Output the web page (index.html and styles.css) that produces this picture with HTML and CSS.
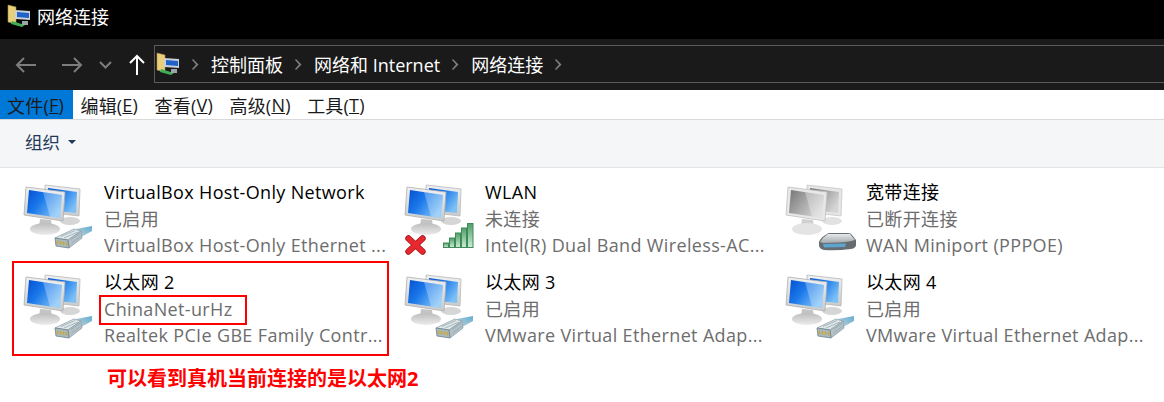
FILE: index.html
```html
<!doctype html>
<html lang="zh-CN">
  <head>
    <title>网络连接</title>
    <meta charset="UTF-8">
    <link rel="stylesheet" href="styles.css">
  </head>
  <body>
<svg class="defs" width="0" height="0">
  <defs>
    <linearGradient id="screen" x1="0" y1="0" x2="1" y2="0.6">
      <stop offset="0" stop-color="#0650d0"/>
      <stop offset="0.45" stop-color="#1a78ea"/>
      <stop offset="1" stop-color="#7cc0f6"/>
    </linearGradient>
    <linearGradient id="screen-off" x1="0" y1="0" x2="1" y2="0.6">
      <stop offset="0" stop-color="#757575"/>
      <stop offset="0.45" stop-color="#a2a2a2"/>
      <stop offset="1" stop-color="#d6d6d6"/>
    </linearGradient>
    <linearGradient id="frame" x1="0" y1="0" x2="0" y2="1">
      <stop offset="0" stop-color="#eef0f1"/>
      <stop offset="1" stop-color="#c9cbcc"/>
    </linearGradient>
    <linearGradient id="stand" x1="0" y1="0" x2="0" y2="1">
      <stop offset="0" stop-color="#bdbdbd"/>
      <stop offset="1" stop-color="#ececec"/>
    </linearGradient>
    <linearGradient id="bar" x1="0" y1="0" x2="0" y2="1">
      <stop offset="0" stop-color="#4f9f68"/>
      <stop offset="1" stop-color="#c9eed5"/>
    </linearGradient>
    <linearGradient id="cable" x1="0" y1="1" x2="1" y2="0">
      <stop offset="0" stop-color="#c3d0d6"/>
      <stop offset="1" stop-color="#62aed3"/>
    </linearGradient>
    <linearGradient id="modem-top" x1="0" y1="0" x2="0" y2="1">
      <stop offset="0" stop-color="#e6e8e9"/>
      <stop offset="1" stop-color="#a3a9ad"/>
    </linearGradient>
    <symbol id="pcs" viewBox="0 0 66 66">
      <!-- back monitor -->
      <ellipse cx="47" cy="39" rx="10" ry="4" fill="#d6d6d6"/>
      <path d="M22 3 L57 7 L56 34 L22 30 Z" fill="url(#frame)" stroke="#b8b8b8" stroke-width="0.8"/>
      <path d="M25 6 L54 10 L53 31 L25 28 Z" fill="url(#screen)"/>
      <!-- front monitor -->
      <path d="M17 37 L28 38 L29 45 L16 45 Z" fill="#c4c4c4"/>
      <ellipse cx="22" cy="47" rx="15" ry="6" fill="url(#stand)"/>
      <path d="M3 5 L42 10 L40 39 L1 33 Z" fill="url(#frame)" stroke="#aeaeae" stroke-width="0.8"/>
      <path d="M6 8 L39 13 L37 36 L4 31 Z" fill="url(#screen)"/>
      <path d="M20 10 L39 13 L37 36 L27 34.5 Z" fill="#fff" opacity="0.28"/>
    </symbol>
    <symbol id="pcs-off" viewBox="0 0 66 66">
      <ellipse cx="47" cy="39" rx="10" ry="4" fill="#e2e2e2"/>
      <path d="M22 3 L57 7 L56 34 L22 30 Z" fill="#e6e6e6" stroke="#c6c6c6" stroke-width="0.8"/>
      <path d="M25 6 L54 10 L53 31 L25 28 Z" fill="url(#screen-off)"/>
      <path d="M17 37 L28 38 L29 45 L16 45 Z" fill="#d0d0d0"/>
      <ellipse cx="22" cy="47" rx="15" ry="6" fill="#e4e4e4"/>
      <path d="M3 5 L42 10 L40 39 L1 33 Z" fill="#e8e8e8" stroke="#c0c0c0" stroke-width="0.8"/>
      <path d="M6 8 L39 13 L37 36 L4 31 Z" fill="url(#screen-off)"/>
      <path d="M20 10 L39 13 L37 36 L27 34.5 Z" fill="#fff" opacity="0.3"/>
    </symbol>
    <symbol id="plug" viewBox="0 0 39 23">
      <path d="M22 3 L38 0 L38 5 L27 11 Z" fill="url(#cable)"/>
      <path d="M1 12 L20 3 L27 5 L14 14 Z" fill="#dfe7ea" stroke="#8ea0a8" stroke-width="0.8"/>
      <path d="M14 14 L27 5 L28 12 L15 22 Z" fill="#b4c2c8" stroke="#8ea0a8" stroke-width="0.8"/>
      <path d="M1 12 L14 14 L15 22 L2 20 Z" fill="#a9babf" stroke="#6f8088" stroke-width="0.8"/>
      <path d="M3.5 14.5 L3.5 18 M6.5 15 L6.5 18.5 M9.5 15.5 L9.5 19 M12.5 16 L12.5 19.5" stroke="#c9a73c" stroke-width="1.6"/>
      <path d="M7 10.5 L21 4.5 M10 12 L24 6 M17 13.5 L26 7.5 M17.5 17 L26.5 10.5" stroke="#8ea0a8" stroke-width="0.7" fill="none"/>
    </symbol>
    <symbol id="flag" viewBox="0 0 21 20">
      <path d="M3.5 3.5 L17.5 16.5 M17.5 3.5 L3.5 16.5" stroke="#a81a20" stroke-width="6.4" stroke-linecap="round" fill="none"/>
      <path d="M3.5 3.5 L17.5 16.5 M17.5 3.5 L3.5 16.5" stroke="#e8282e" stroke-width="4.6" stroke-linecap="round" fill="none"/>
    </symbol>
    <symbol id="signal" viewBox="0 0 31 25">
      <rect x="0.5" y="20" width="5" height="4.5" fill="url(#bar)" stroke="#3f8a58"/>
      <rect x="6.5" y="15" width="5" height="9.5" fill="url(#bar)" stroke="#3f8a58"/>
      <rect x="12.5" y="10" width="5" height="14.5" fill="url(#bar)" stroke="#3f8a58"/>
      <rect x="18.5" y="5" width="5" height="19.5" fill="url(#bar)" stroke="#3f8a58"/>
      <rect x="24.5" y="0.5" width="5.5" height="24" fill="url(#bar)" stroke="#3f8a58"/>
    </symbol>
    <symbol id="modem" viewBox="0 0 39 19">
      <path d="M1 10 Q3 5 9 2 Q10 1 12 1 L30 1 Q33 1 34 3 L38 8 L38 13 Q38 16 33 17 Q18 19 6 18 Q1 17 1 13 Z" fill="#666c70"/>
      <path d="M2 10 Q5 5 10 2 L32 2 L37 8 Q30 10 20 10.5 L5 11 Z" fill="url(#modem-top)"/>
      <path d="M5 12 L28 11.5 L27 15 L6 15.5 Z" fill="#5ba5cf"/>
    </symbol>
    <symbol id="folder-net" viewBox="0 0 24 24">
      <path d="M1 1 L9 3 L9 20 L1 18 Z" fill="#e9cf7a" stroke="#a8914a" stroke-width="0.6"/>
      <path d="M8 6 L23 7 L23 16 L8 15 Z" fill="#c9d0d6"/>
      <path d="M10 8 L22 9 L22 14 L10 13 Z" fill="#1f62c9"/>
      <path d="M5 17 L18 21 L15 23 L4 20 Z" fill="#3fae55"/>
      <path d="M15 17 L21 17 L21 21 L15 21 Z" fill="#9aa3a8"/>
    </symbol>
  </defs>
</svg>

<header class="titlebar">
  <svg class="title-icon"><use href="#folder-net"/></svg>
  <span>网络连接</span>
</header>

<nav class="navbar">
  <svg class="back" width="22" height="18" viewBox="0 0 22 18"><path d="M21 9 H2 M9 2 L2 9 L9 16" class="arrow dim"/></svg>
  <svg class="forward" width="22" height="18" viewBox="0 0 22 18"><path d="M1 9 H20 M13 2 L20 9 L13 16" class="arrow dim"/></svg>
  <svg class="down" width="13" height="8" viewBox="0 0 13 8"><path d="M1 1 L6.5 6.5 L12 1" class="arrow dim"/></svg>
  <svg class="up" width="16" height="22" viewBox="0 0 16 22"><path d="M8 21 V2 M1 9 L8 2 L15 9" class="arrow lit"/></svg>
  <div class="address">
    <svg class="addr-icon"><use href="#folder-net"/></svg>
    <svg class="crumb-sep" width="7" height="11" viewBox="0 0 7 11"><path d="M1 0 L6.5 5.5 L1 11 L0 10 L4 5.5 L0 1 Z"/></svg>
    <span>控制面板</span>
    <svg class="crumb-sep" width="7" height="11" viewBox="0 0 7 11"><path d="M1 0 L6.5 5.5 L1 11 L0 10 L4 5.5 L0 1 Z"/></svg>
    <span>网络和 Internet</span>
    <svg class="crumb-sep" width="7" height="11" viewBox="0 0 7 11"><path d="M1 0 L6.5 5.5 L1 11 L0 10 L4 5.5 L0 1 Z"/></svg>
    <span>网络连接</span>
    <svg class="crumb-sep" width="7" height="11" viewBox="0 0 7 11"><path d="M1 0 L6.5 5.5 L1 11 L0 10 L4 5.5 L0 1 Z"/></svg>
  </div>
</nav>

<div class="menubar">
  <span class="menu active">文件(<u>F</u>)</span>
  <span class="menu">编辑(<u>E</u>)</span>
  <span class="menu">查看(<u>V</u>)</span>
  <span class="menu">高级(<u>N</u>)</span>
  <span class="menu">工具(<u>T</u>)</span>
</div>

<div class="toolbar">
  <span>组织</span>
  <i class="caret"></i>
</div>

<main class="list">
  <div class="item">
    <div class="icon"><svg class="pcs"><use href="#pcs"/></svg><svg class="plug"><use href="#plug"/></svg></div>
    <div class="info">
      <div class="name">VirtualBox Host-Only Network</div>
      <div class="sub">已启用</div>
      <div class="sub">VirtualBox Host-Only Ethernet ...</div>
    </div>
  </div>
  <div class="item">
    <div class="icon"><svg class="pcs"><use href="#pcs"/></svg><svg class="flag"><use href="#flag"/></svg><svg class="signal"><use href="#signal"/></svg></div>
    <div class="info">
      <div class="name">WLAN</div>
      <div class="sub">未连接</div>
      <div class="sub">Intel(R) Dual Band Wireless-AC...</div>
    </div>
  </div>
  <div class="item">
    <div class="icon"><svg class="pcs"><use href="#pcs-off"/></svg><svg class="modem"><use href="#modem"/></svg></div>
    <div class="info">
      <div class="name">宽带连接</div>
      <div class="sub">已断开连接</div>
      <div class="sub">WAN Miniport (PPPOE)</div>
    </div>
  </div>
  <div class="item">
    <div class="icon"><svg class="pcs"><use href="#pcs"/></svg><svg class="plug"><use href="#plug"/></svg></div>
    <div class="info">
      <div class="name">以太网 2</div>
      <div class="sub">ChinaNet-urHz</div>
      <div class="sub">Realtek PCIe GBE Family Contr...</div>
    </div>
  </div>
  <div class="item">
    <div class="icon"><svg class="pcs"><use href="#pcs"/></svg><svg class="plug"><use href="#plug"/></svg></div>
    <div class="info">
      <div class="name">以太网 3</div>
      <div class="sub">已启用</div>
      <div class="sub">VMware Virtual Ethernet Adap...</div>
    </div>
  </div>
  <div class="item">
    <div class="icon"><svg class="pcs"><use href="#pcs"/></svg><svg class="plug"><use href="#plug"/></svg></div>
    <div class="info">
      <div class="name">以太网 4</div>
      <div class="sub">已启用</div>
      <div class="sub">VMware Virtual Ethernet Adap...</div>
    </div>
  </div>
</main>

<!-- red annotations drawn over the screenshot -->
<div class="mark mark-item"></div>
<div class="mark mark-ssid"></div>
<div class="note">可以看到真机当前连接的是以太网2</div>
  </body>
</html>
```

FILE: styles.css
```css
html, body {
  margin: 0;
  height: 402px;
  overflow: hidden;
  background: white;
  font-family: "Open Sans", "Noto Sans CJK SC", sans-serif;
  font-size: 18px;
}
body {
  position: relative;
}
.defs {
  position: absolute;
}
.titlebar {
  height: 39px;
  background: #000;
  color: #fff;
  display: flex;
  align-items: center;
  padding: 0 0 8px 7px;
  box-sizing: border-box;
  gap: 6px;
}
.title-icon {
  width: 24px;
  height: 24px;
}
.navbar {
  height: 51px;
  background: #1a1a1a;
  display: flex;
  align-items: center;
  box-sizing: border-box;
  padding-left: 15px;
}
.arrow {
  fill: none;
  stroke-width: 2;
}
.arrow.dim {
  stroke: #7d7d7d;
}
.arrow.lit {
  stroke: #fff;
}
.forward {
  margin-left: 24px;
}
.down {
  margin-left: 16px;
}
.up {
  margin-left: 17px;
}
.address {
  margin-left: 9px;
  margin-top: -1px;
  height: 36px;
  flex: 1;
  border: 1px solid #5a5a5a;
  border-right: none;
  display: flex;
  align-items: center;
  color: #fff;
  padding-left: 1px;
}
.addr-icon {
  width: 24px;
  height: 26px;
}
.crumb-sep {
  fill: #7d7d7d;
  margin: 0 12px 0 12px;
}
.menubar {
  height: 30px;
  background: #fff;
  border-bottom: 1px solid #d9d9d9;
  box-sizing: border-box;
  display: flex;
  align-items: center;
  color: #1a1a1a;
}
.menu {
  height: 100%;
  display: flex;
  align-items: center;
  padding: 0 9.5px 0 7px;
  letter-spacing: 0.2px;
  white-space: pre;
}
.menu.active {
  background: #0078d7;
}
.toolbar {
  height: 48px;
  background: #f5f6f7;
  border-bottom: 1px solid #e3e3e3;
  box-sizing: border-box;
  display: flex;
  align-items: center;
  padding: 0 0 4px 25px;
  gap: 8px;
  color: #1e395b;
  font-size: 17.5px;
}
.caret {
  border: 4px solid transparent;
  border-top: 4px solid #1e395b;
  border-bottom: none;
}
.list {
  display: grid;
  grid-template-columns: repeat(3, 381px);
  grid-auto-rows: 90px;
  padding: 14px 0 0 23px;
}
.item {
  display: flex;
}
.icon {
  position: relative;
  width: 81px;
  height: 78px;
  flex: none;
}
.pcs {
  position: absolute;
  left: 0;
  top: 0;
  width: 66px;
  height: 66px;
}
.plug {
  position: absolute;
  left: 31px;
  top: 44px;
  width: 39px;
  height: 23px;
}
.flag {
  position: absolute;
  left: 1px;
  top: 53px;
  width: 21px;
  height: 20px;
}
.signal {
  position: absolute;
  left: 39px;
  top: 41px;
  width: 31px;
  height: 25px;
}
.modem {
  position: absolute;
  left: 33px;
  top: 50px;
  width: 39px;
  height: 19px;
}
.info {
  white-space: nowrap;
  line-height: 26.5px;
  margin-top: -3px;
  letter-spacing: 0.35px;
}
.name {
  color: #000;
}
.sub {
  color: #6d6d6d;
}
.mark {
  position: absolute;
  border: 2px solid #f00;
  box-sizing: border-box;
}
.mark-item {
  left: 12px;
  top: 261px;
  width: 377px;
  height: 95px;
}
.mark-ssid {
  left: 99px;
  top: 295px;
  width: 148px;
  height: 30px;
}
.note {
  position: absolute;
  left: 107px;
  top: 365px;
  color: #f00;
  font-weight: bold;
  font-size: 20px;
  line-height: 28px;
  white-space: nowrap;
}
```
